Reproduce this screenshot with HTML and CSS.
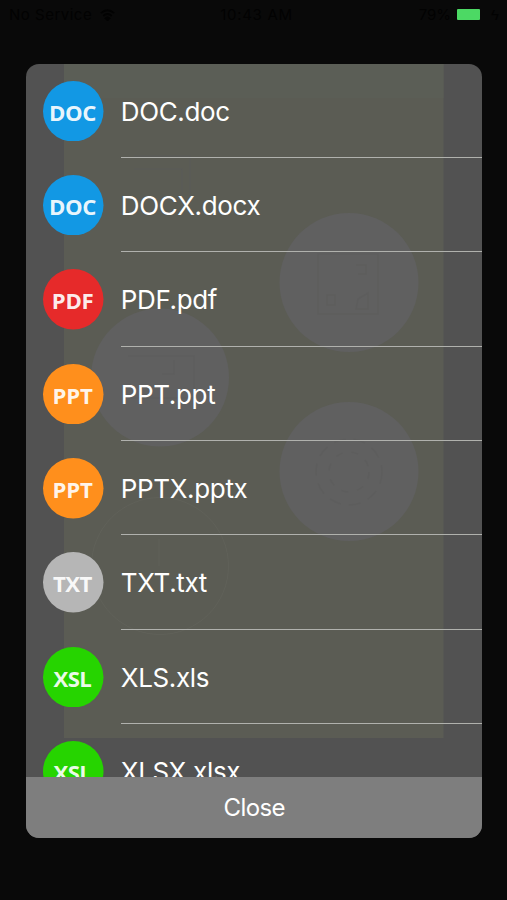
FILE: index.html
```html
<!DOCTYPE html>
<html lang="en">
<head>
<meta charset="utf-8">
<title>Files</title>
<link rel="stylesheet" href="styles.css">
</head>
<body>
<header class="status">
  <div class="status-left"><span>No Service</span>
    <svg class="wifi" viewBox="0 0 16 12"><path d="M1 4Q8-2 15 4M3.500 7Q8 3 12.500 7M6 9.500Q8 8 10 9.500L8 11.500Z"/></svg>
  </div>
  <div class="status-time">10:43 AM</div>
  <div class="status-right"><span>79%</span><i class="battery"></i><span class="bolt">ϟ</span></div>
</header>
<main class="dialog">
  <div class="list">
    <svg class="backdrop" viewBox="0 0 456 714">
      <rect class="panel" x="38" y="0" width="379.500" height="674"/>
      <rect class="panel-top" x="38" y="0" width="379.500" height="34"/>
      <g class="disc"><circle cx="323" cy="218.500" r="69.500"/><circle cx="134" cy="313.500" r="69"/><circle cx="323" cy="407.500" r="69.500"/></g>
      <circle class="ring" cx="134" cy="502" r="68.500"/>
      <g class="mark">
        <rect x="292" y="190" width="60" height="60"/>
        <path d="M330 201h10v9h-8M301 231h8v10h-8zM332 235l10-6v16h-12z"/>
        <path d="M108 92h56v45M108 105h48v28"/>
        <path d="M102 292h66v42h-66M148 296v14h-12"/>
        <circle cx="323" cy="408" r="33" stroke-dasharray="12 8"/><circle cx="323" cy="408" r="20" stroke-dasharray="7 9"/>
      </g>
      <path class="ring" d="M133 475v27"/>
    </svg>
    <div class="row"><svg class="badge blue" viewBox="0 0 60 60"><circle cx="30" cy="30" r="30"/><text x="29.500" y="39.500" textLength="47">DOC</text></svg><div class="name">DOC.doc</div></div>
    <div class="row"><svg class="badge blue" viewBox="0 0 60 60"><circle cx="30" cy="30" r="30"/><text x="29.500" y="39.500" textLength="47">DOC</text></svg><div class="name">DOCX.docx</div></div>
    <div class="row"><svg class="badge red" viewBox="0 0 60 60"><circle cx="30" cy="30" r="30"/><text x="29.500" y="39.500" textLength="41.500">PDF</text></svg><div class="name">PDF.pdf</div></div>
    <div class="row"><svg class="badge orange" viewBox="0 0 60 60"><circle cx="30" cy="30" r="30"/><text x="29.500" y="39.500" textLength="40">PPT</text></svg><div class="name">PPT.ppt</div></div>
    <div class="row"><svg class="badge orange" viewBox="0 0 60 60"><circle cx="30" cy="30" r="30"/><text x="29.500" y="39.500" textLength="40">PPT</text></svg><div class="name">PPTX.pptx</div></div>
    <div class="row"><svg class="badge gray" viewBox="0 0 60 60"><circle cx="30" cy="30" r="30"/><text x="29.500" y="39.500" textLength="39">TXT</text></svg><div class="name">TXT.txt</div></div>
    <div class="row"><svg class="badge green" viewBox="0 0 60 60"><circle cx="30" cy="30" r="30"/><text x="29.500" y="39.500" textLength="38">XSL</text></svg><div class="name">XLS.xls</div></div>
    <div class="row"><svg class="badge green" viewBox="0 0 60 60"><circle cx="30" cy="30" r="30"/><text x="29.500" y="39.500" textLength="38">XSL</text></svg><div class="name">XLSX.xlsx</div></div>
  </div>
  <button class="close" type="button">Close</button>
</main>
</body>
</html>
```
FILE: styles.css
```css
* { box-sizing: border-box; }
body {
  margin: 0;
  height: 900px;
  overflow: hidden;
  background: #090909;
  font-family: Inter, "Liberation Sans", sans-serif;
}
.status {
  display: grid;
  grid-template-columns: 1fr auto 1fr;
  align-items: center;
  height: 29px;
  padding: 0 3px 0 9px;
  color: #020202;
  font-size: 15px;
}
.status-left, .status-right { display: flex; align-items: center; gap: 8px; }
.status-left { letter-spacing: .5px; }
.status-time { letter-spacing: .7px; }
.status-right { justify-content: flex-end; gap: 6px; }
.wifi { width: 15px; height: 12px; fill: none; stroke: #020202; stroke-width: 2; }
.battery { width: 23px; height: 11px; background: #4cd964; border-radius: 1px; }
.bolt { width: 18px; text-align: center; }
.dialog {
  display: flex;
  flex-direction: column;
  width: 456px;
  height: 774px;
  margin: 34.5px 0 0 26.3px;
  border-radius: 13px;
  overflow: hidden;
  background: #525252;
  color: #fff;
}
.list { position: relative; height: 713.5px; overflow: hidden; }
.backdrop { position: absolute; top: 0; left: 0; width: 456px; height: 714px; }
.panel { fill: #5b5c54; }
.panel-top { fill: #5b5e56; }
.disc { fill: #606060; }
.ring { fill: none; stroke: #606159; }
.mark { fill: none; stroke: #5b5b5a; stroke-width: 1.5; opacity: .4; }
.row {
  position: relative;
  display: flex;
  align-items: stretch;
  height: 94.4px;
  padding-left: 17.2px;
  gap: 16.8px;
}
.badge { flex: none; width: 60.5px; height: 60.5px; margin-top: 17px; }
.badge text {
  fill: #fff;
  fill-opacity: .92;
  font: 700 22px "Open Sans", "Noto Sans", sans-serif;
  text-anchor: middle;
}
.blue { fill: #1298e4; }
.red { fill: #e62a2a; }
.orange { fill: #ff8f1c; }
.gray { fill: #b6b6b6; }
.green { fill: #26d400; }
.name {
  flex: 1;
  border-bottom: 1.3px solid #b0b1ad;
  font-size: 26px;
  line-height: 95px;
  letter-spacing: -.35px;
  white-space: nowrap;
}
.close {
  flex: 1;
  border: 0;
  padding: 0;
  background: #7e7e7e;
  color: #fff;
  font: 400 24px Inter, "Liberation Sans", sans-serif;
  letter-spacing: -.6px;
}
```
